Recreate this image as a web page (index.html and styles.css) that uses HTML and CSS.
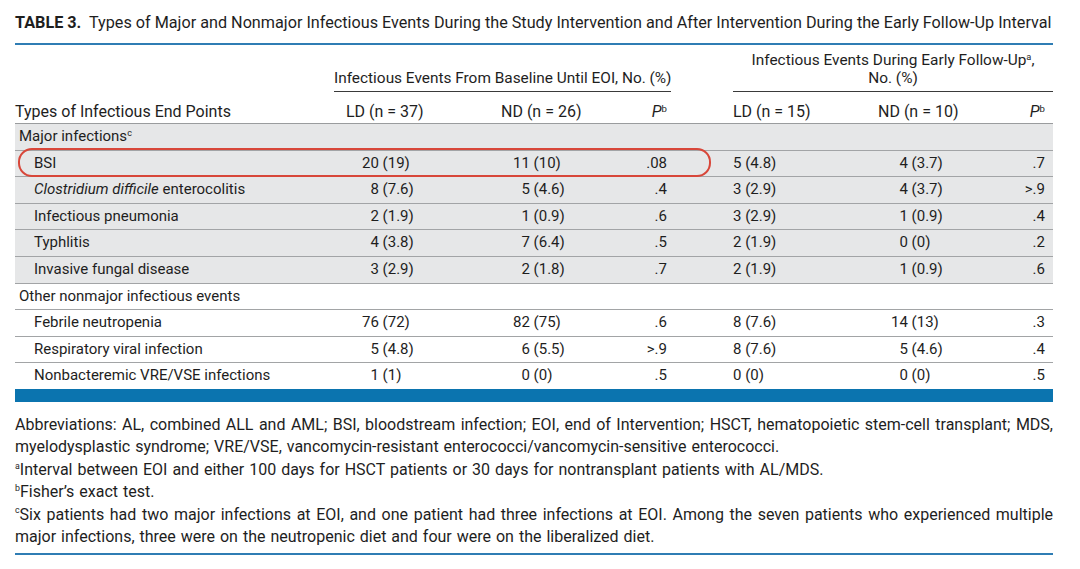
FILE: index.html
```html
<!DOCTYPE html>
<html lang="en">
<head>
<meta charset="utf-8">
<title>Table 3</title>
<link rel="stylesheet" href="styles.css">
</head>
<body>
<div class="page">
  <h1 class="title"><b>TABLE 3.</b>&nbsp; Types of Major and Nonmajor Infectious Events During the Study Intervention and After Intervention During the Early Follow-Up Interval</h1>
  <div class="table-wrap">
    <table class="data">
      <colgroup>
        <col class="c-label"><col class="c-ld1"><col class="c-nd1"><col class="c-p1"><col class="c-ld2"><col class="c-nd2"><col class="c-p2">
      </colgroup>
      <thead>
        <tr class="group-row">
          <th></th>
          <th colspan="3" class="grp"><div class="grp-inner">Infectious Events From Baseline Until EOI, No. (%)</div></th>
          <th colspan="3" class="grp grp2"><div class="grp-inner">Infectious Events During Early Follow-Up<sup>a</sup>,<br>No. (%)</div></th>
        </tr>
        <tr class="col-row">
          <th class="label">Types of Infectious End Points</th>
          <th class="ld1">LD (n = 37)</th>
          <th class="nd1">ND (n = 26)</th>
          <th class="p1"><i>P</i><sup>b</sup></th>
          <th class="ld2">LD (n = 15)</th>
          <th class="nd2">ND (n = 10)</th>
          <th class="p2"><i>P</i><sup>b</sup></th>
        </tr>
      </thead>
      <tbody class="shaded">
        <tr><td class="label" colspan="7">Major infections<sup>c</sup></td></tr>
        <tr>
          <td class="item">BSI</td>
          <td class="ld1"><span class="n">20</span> (19)</td>
          <td class="nd1"><span class="n">11</span> (10)</td>
          <td class="p1">.08</td>
          <td class="ld2">5 (4.8)</td>
          <td class="nd2"><span class="n">4</span> (3.7)</td>
          <td class="p2">.7</td>
        </tr>
        <tr>
          <td class="item"><i>Clostridium difficile</i> enterocolitis</td>
          <td class="ld1"><span class="n">8</span> (7.6)</td>
          <td class="nd1"><span class="n">5</span> (4.6)</td>
          <td class="p1">.4</td>
          <td class="ld2">3 (2.9)</td>
          <td class="nd2"><span class="n">4</span> (3.7)</td>
          <td class="p2">&gt;.9</td>
        </tr>
        <tr>
          <td class="item">Infectious pneumonia</td>
          <td class="ld1"><span class="n">2</span> (1.9)</td>
          <td class="nd1"><span class="n">1</span> (0.9)</td>
          <td class="p1">.6</td>
          <td class="ld2">3 (2.9)</td>
          <td class="nd2"><span class="n">1</span> (0.9)</td>
          <td class="p2">.4</td>
        </tr>
        <tr>
          <td class="item">Typhlitis</td>
          <td class="ld1"><span class="n">4</span> (3.8)</td>
          <td class="nd1"><span class="n">7</span> (6.4)</td>
          <td class="p1">.5</td>
          <td class="ld2">2 (1.9)</td>
          <td class="nd2"><span class="n">0</span> (0)</td>
          <td class="p2">.2</td>
        </tr>
        <tr>
          <td class="item">Invasive fungal disease</td>
          <td class="ld1"><span class="n">3</span> (2.9)</td>
          <td class="nd1"><span class="n">2</span> (1.8)</td>
          <td class="p1">.7</td>
          <td class="ld2">2 (1.9)</td>
          <td class="nd2"><span class="n">1</span> (0.9)</td>
          <td class="p2">.6</td>
        </tr>
      </tbody>
      <tbody class="plain">
        <tr><td class="label" colspan="7">Other nonmajor infectious events</td></tr>
        <tr>
          <td class="item">Febrile neutropenia</td>
          <td class="ld1"><span class="n">76</span> (72)</td>
          <td class="nd1"><span class="n">82</span> (75)</td>
          <td class="p1">.6</td>
          <td class="ld2">8 (7.6)</td>
          <td class="nd2"><span class="n">14</span> (13)</td>
          <td class="p2">.3</td>
        </tr>
        <tr>
          <td class="item">Respiratory viral infection</td>
          <td class="ld1"><span class="n">5</span> (4.8)</td>
          <td class="nd1"><span class="n">6</span> (5.5)</td>
          <td class="p1">&gt;.9</td>
          <td class="ld2">8 (7.6)</td>
          <td class="nd2"><span class="n">5</span> (4.6)</td>
          <td class="p2">.4</td>
        </tr>
        <tr class="last">
          <td class="item">Nonbacteremic VRE/VSE infections</td>
          <td class="ld1"><span class="n">1</span> (1)</td>
          <td class="nd1"><span class="n">0</span> (0)</td>
          <td class="p1">.5</td>
          <td class="ld2">0 (0)</td>
          <td class="nd2"><span class="n">0</span> (0)</td>
          <td class="p2">.5</td>
        </tr>
      </tbody>
    </table>
    <div class="highlight"></div>
  </div>
  <div class="bar"></div>
  <div class="notes">
    <p>Abbreviations: AL, combined ALL and AML; BSI, bloodstream infection; EOI, end of Intervention; HSCT, hematopoietic stem-cell transplant; MDS, myelodysplastic syndrome; VRE/VSE, vancomycin-resistant enterococci/vancomycin-sensitive enterococci.</p>
    <p><sup>a</sup>Interval between EOI and either 100 days for HSCT patients or 30 days for nontransplant patients with AL/MDS.</p>
    <p><sup>b</sup>Fisher’s exact test.</p>
    <p><sup>c</sup>Six patients had two major infections at EOI, and one patient had three infections at EOI. Among the seven patients who experienced multiple major infections, three were on the neutropenic diet and four were on the liberalized diet.</p>
  </div>
</div>
</body>
</html>
```

FILE: styles.css
```css
body {
  margin: 0;
  background: #ffffff;
  font-family: Roboto, "Liberation Sans", sans-serif;
  color: #1e1e1e;
}

.page {
  width: 1038px;
  margin-left: 15px;
}

.title {
  margin: 0;
  padding: 13px 0 10px;
  font-size: 16.2px;
  font-weight: 400;
  line-height: 20px;
  white-space: nowrap;
  border-bottom: 2px solid #2f7db4;
}

.title b {
  font-weight: 700;
}

.table-wrap {
  position: relative;
}

.data {
  width: 1038px;
  border-collapse: collapse;
  table-layout: fixed;
  font-size: 15px;
}

.c-label { width: 319px; }
.c-ld1 { width: 146px; }
.c-nd1 { width: 120px; }
.c-p1 { width: 71px; }
.c-ld2 { width: 179px; }
.c-nd2 { width: 140px; }
.c-p2 { width: 63px; }

th {
  font-weight: 400;
}

sup {
  font-size: 0.6em;
  line-height: 0;
  vertical-align: 0.55em;
}

.group-row th {
  height: 47px;
  padding: 0;
  vertical-align: bottom;
  font-size: 15.4px;
  line-height: 18px;
}

.grp-inner {
  text-align: center;
  padding-bottom: 4px;
  border-bottom: 1px solid #3a3a3a;
  white-space: nowrap;
}

.grp2 .grp-inner {
  margin-left: 62px;
}

.col-row th {
  padding: 10px 0 2px;
  font-size: 16px;
  line-height: 19px;
  text-align: left;
  white-space: nowrap;
  border-bottom: 1px solid #9a9c9e;
}

tbody td {
  padding: 3px 0 3.6px;
  line-height: 19px;
  white-space: nowrap;
  border-bottom: 1px solid #a2a4a6;
}

tbody tr.last td {
  border-bottom: 0;
}

tbody.shaded td {
  background: #e6e7e8;
}

.label { padding-left: 4px; }
td.label { padding-left: 4px; }
td.item { padding-left: 19px; }

th.ld1 { padding-left: 12px; }
td.ld1 { padding-left: 28px; }
th.nd1 { padding-left: 21px; }
td.nd1 { padding-left: 33px; }
.p1, th.p1 { text-align: right; padding-right: 4px; }
th.ld2, td.ld2 { padding-left: 62px; }
th.nd2 { padding-left: 28px; }
td.nd2 { padding-left: 41px; }
.p2, th.p2 { text-align: right; padding-right: 8px; }

.n {
  display: inline-block;
  width: 2ch;
  text-align: right;
}

.highlight {
  position: absolute;
  left: 3px;
  top: 103px;
  width: 693px;
  height: 29px;
  box-sizing: border-box;
  border: 2px solid #d8473a;
  border-radius: 14px;
  pointer-events: none;
}

.bar {
  height: 13px;
  background: #0b74af;
}

.notes {
  padding: 12px 0 5px;
  font-size: 16px;
  line-height: 22.4px;
  word-spacing: 1px;
  text-align: justify;
  border-bottom: 2px solid #2f7db4;
}

.notes p {
  margin: 0;
}

.notes sup {
  font-size: 0.55em;
  vertical-align: baseline;
  position: relative;
  top: -0.7em;
}
```
